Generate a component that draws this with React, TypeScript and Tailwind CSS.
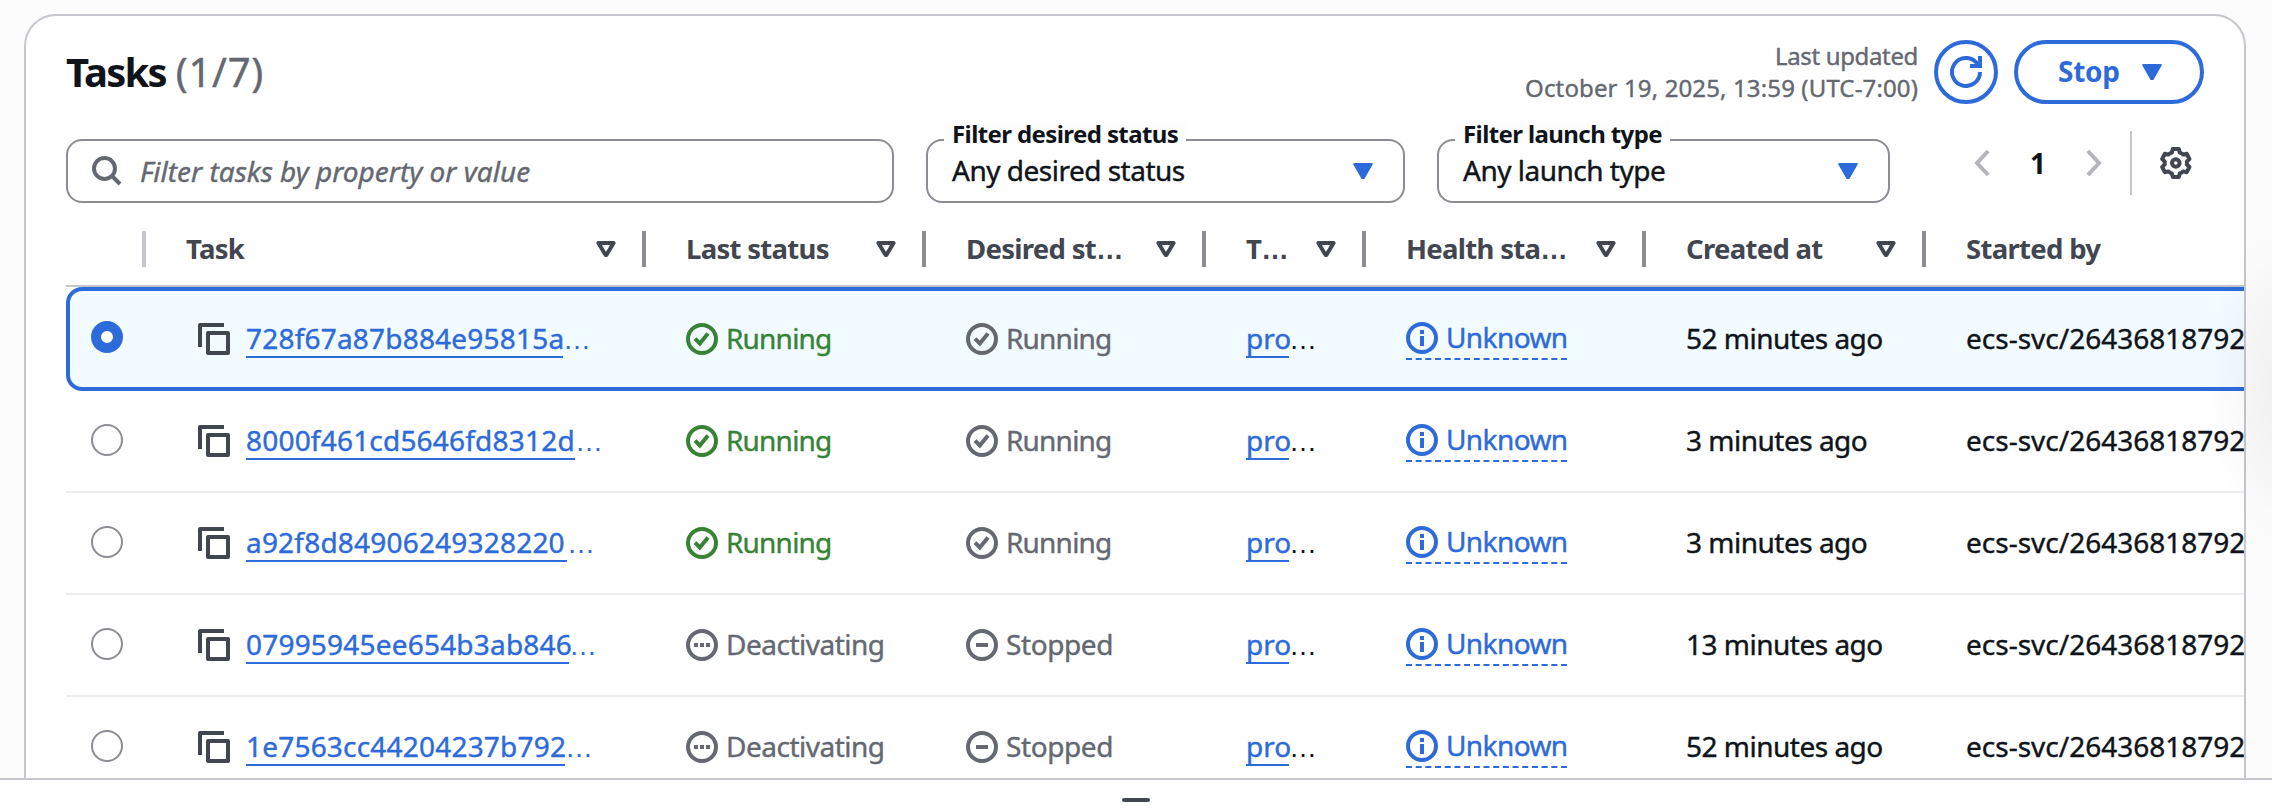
import React from "react";

const sans = "font-['Noto_Sans','Open_Sans',sans-serif]";

function Caret({ className = "" }: { className?: string }) {
  return (
    <svg viewBox="0 0 20 16" className={`h-4 w-5 shrink-0 ${className}`}>
      <path d="M1.2 1H18.8L10.8 15H9.2Z" fill="currentColor" stroke="currentColor" strokeWidth="2" strokeLinejoin="round" />
    </svg>
  );
}

function SortIcon() {
  return (
    <svg viewBox="0 0 20 16" className="h-4 w-5 shrink-0">
      <path d="M2.4 2H17.6L10.4 14H9.6Z" fill="none" stroke="currentColor" strokeWidth="4" strokeLinejoin="round" />
    </svg>
  );
}

function StatusIcon({ kind, className = "" }: { kind: "check" | "dots" | "minus" | "info"; className?: string }) {
  return (
    <svg viewBox="0 0 32 32" className={`size-8 shrink-0 ${className}`} fill="none" stroke="currentColor" strokeWidth="4">
      <circle cx="16" cy="16" r="14" />
      {kind === "check" && <path d="M9 15.6L13.8 20.4L22 10.4" />}
      {kind === "minus" && <path d="M10 16H22" />}
      {kind === "dots" && <path d="M8 16H12M14 16H18M20 16H24" />}
      {kind === "info" && <path d="M16 14V24M16 8V12" />}
    </svg>
  );
}

function CopyIcon() {
  return (
    <svg viewBox="0 0 32 32" className="size-8 shrink-0 text-[#424650]" fill="none" stroke="currentColor" strokeWidth="4">
      <path d="M2 24V2H26" strokeLinejoin="round" />
      <path d="M10 10H30V30H10Z" strokeLinejoin="round" />
    </svg>
  );
}

function Ellipsis() {
  return <span className="font-['Liberation_Sans',sans-serif] tracking-normal [-webkit-text-stroke:0px]">…</span>;
}

const columns = [
  { label: "Task", cut: false, width: "w-[500px]" },
  { label: "Last status", cut: false, width: "w-[280px]" },
  { label: "Desired st", cut: true, width: "w-[280px]" },
  { label: "T", cut: true, width: "w-[160px]" },
  { label: "Health sta", cut: true, width: "w-[280px]" },
  { label: "Created at", cut: false, width: "w-[280px]" },
  { label: "Started by", cut: false, width: "w-[500px]" },
];

const rows = [
  { id: "728f67a87b884e95815a", width: "w-[317px]", running: true, created: "52 minutes ago" },
  { id: "8000f461cd5646fd8312d", width: "w-[329px]", running: true, created: "3 minutes ago" },
  { id: "a92f8d84906249328220", width: "w-[321px]", running: true, created: "3 minutes ago" },
  { id: "07995945ee654b3ab846", width: "w-[323px]", running: false, created: "13 minutes ago" },
  { id: "1e7563cc44204237b792", width: "w-[319px]", running: false, created: "52 minutes ago" },
];

function Row({ row, selected }: { row: (typeof rows)[number]; selected: boolean }) {
  return (
    <div
      className={
        selected
          ? "flex h-[104px] w-[2300px] items-center rounded-2xl border-4 border-[#2d6ada] bg-[#f2fbff]"
          : "flex h-[102px] w-[2300px] items-center border-b-2 border-[#ebebf0] pl-1"
      }
    >
      <div className={`w-[74px] shrink-0 pl-[21px] ${selected ? "pb-1" : "pb-0.5"}`}>
        {selected ? (
          <div className="size-8 rounded-full border-[10px] border-[#2d6ada] bg-white" />
        ) : (
          <div className="size-8 rounded-full border-2 border-[#8c8c94] bg-white" />
        )}
      </div>
      <div className="flex w-[500px] shrink-0 items-center pl-[54px]">
        <CopyIcon />
        <span className="ml-4 flex h-10 items-baseline text-[#2d6ada]">
          <span className={`h-[39px] shrink-0 border-b-2 border-[#2d6ada] tracking-[0.2px] ${row.width}`}>{row.id}</span>
          <Ellipsis />
        </span>
      </div>
      <div className={`flex w-[280px] shrink-0 items-center gap-2 pl-[42px] ${row.running ? "tracking-[-0.8px] text-[#368336]" : "tracking-[-0.5px] text-[#656871]"}`}>
        <StatusIcon kind={row.running ? "check" : "dots"} />
        <span className="pb-0.5">{row.running ? "Running" : "Deactivating"}</span>
      </div>
      <div className={`flex w-[280px] shrink-0 items-center gap-2 pl-[42px] text-[#656871] ${row.running ? "tracking-[-0.8px]" : "tracking-[-0.4px]"}`}>
        <StatusIcon kind={row.running ? "check" : "minus"} />
        <span className="pb-0.5">{row.running ? "Running" : "Stopped"}</span>
      </div>
      <div className="flex h-10 w-[160px] shrink-0 items-baseline pl-[42px]">
        <span className="h-[39px] w-[43px] border-b-2 border-[#2d6ada] text-[#2d6ada]">pro</span>
        <Ellipsis />
      </div>
      <div className="w-[280px] shrink-0 pl-[42px] text-[#2d6ada]">
        <div className="flex h-[42px] w-[161px] items-start gap-2 border-b-2 border-dashed border-[#2d6ada]">
          <StatusIcon kind="info" className="mt-1" />
          <span className="tracking-[-0.6px]">Unknown</span>
        </div>
      </div>
      <div className="w-[280px] shrink-0 pb-0.5 pl-[42px] tracking-[-0.5px]">{row.created}</div>
      <div className="shrink-0 pb-0.5 pl-[42px]">ecs-svc/26436818792</div>
    </div>
  );
}

function Select({ label, value, className }: { label: string; value: string; className: string }) {
  return (
    <div className={`relative flex h-16 shrink-0 items-center justify-between rounded-2xl border-2 border-[#8c8c94] bg-white pr-[30px] pl-6 ${className}`}>
      <span className="absolute -top-5 left-4 h-[25px] bg-[#fdfdfd] px-2 text-2xl leading-[25px] font-bold tracking-[-0.6px] [-webkit-text-stroke:0px]">{label}</span>
      <span className="pb-0.5 tracking-[-0.5px]">{value}</span>
      <Caret className="text-[#2d6ada]" />
    </div>
  );
}

export default function App() {
  return (
    <div className={`relative flex h-[812px] w-[2272px] flex-col overflow-hidden bg-[#fcfcfd] text-[28px] leading-[38px] whitespace-nowrap text-[#0f141a] [-webkit-text-stroke:0.4px] ${sans}`}>
      <div className="h-[778px] overflow-hidden pt-[14px] pl-6">
        <div className="h-[900px] w-[2222px] overflow-hidden rounded-[32px] border-2 border-[#c6c6cd] bg-white pl-10">
          <div className="flex h-[123px] items-start pt-6 pr-10">
            <h2 className="mt-1 flex gap-2.5 text-[40px] leading-[56px]">
              <span className="font-bold tracking-[-1.8px] [-webkit-text-stroke:0px]">Tasks</span>
              <span className="tracking-[0.7px] text-[#656871]">(1/7)</span>
            </h2>
            <div className="ml-auto text-right text-2xl leading-8 text-[#656871]">
              <div className="tracking-[-0.35px]">Last updated</div>
              <div className="tracking-[0.13px]">October 19, 2025, 13:59 (UTC-7:00)</div>
            </div>
            <button className="ml-4 flex size-16 items-center justify-center rounded-full border-4 border-[#2d6ada] text-[#2d6ada]">
              <svg viewBox="0 0 32 32" className="size-8" fill="none" stroke="currentColor" strokeWidth="4">
                <path d="M30 16A14 14 0 1 1 26.5 6.7L29.5 10" />
                <path d="M30 0V10H20" />
              </svg>
            </button>
            <button className="ml-4 flex h-16 w-[190px] items-center rounded-full border-4 border-[#2d6ada] pl-10 font-bold text-[#2d6ada] [-webkit-text-stroke:0px]">
              <span className="w-[60px] pb-0.5 tracking-[-0.3px]">Stop</span>
              <Caret className="ml-6" />
            </button>
          </div>
          <div className="flex h-[90px]">
            <div className="flex h-16 w-[828px] shrink-0 items-center gap-[18px] rounded-2xl border-2 border-[#8c8c94] pl-6 text-[#656871]">
              <svg viewBox="0 0 30 30" className="size-[30px]" fill="none" stroke="currentColor" strokeWidth="4">
                <circle cx="12.5" cy="12.5" r="10.5" />
                <path d="M19.5 19.5L28 28" />
              </svg>
              <span className="italic">Filter tasks by property or value</span>
            </div>
            <Select className="ml-8 w-[479px]" label="Filter desired status" value="Any desired status" />
            <Select className="ml-8 w-[453px]" label="Filter launch type" value="Any launch type" />
            <div className="-mt-2 ml-[84px] flex h-16 items-center">
              <svg viewBox="0 0 16 28" className="h-7 w-4 text-[#b4b4bb]" fill="none" stroke="currentColor" strokeWidth="4">
                <path d="M14.2 2L3 14L14.2 26" />
              </svg>
              <span className="w-24 text-center font-bold [-webkit-text-stroke:0px]">1</span>
              <svg viewBox="0 0 16 28" className="h-7 w-4 text-[#b4b4bb]" fill="none" stroke="currentColor" strokeWidth="4">
                <path d="M1.8 2L13 14L1.8 26" />
              </svg>
              <div className="ml-7 h-16 w-0.5 bg-[#c6c6cd]" />
              <svg viewBox="0 0 32 32" className="ml-7 size-8 text-[#424650]" fill="none" stroke="currentColor" strokeWidth="4" strokeLinejoin="round">
                <path d="M12.8 2H18.8L19.8 5.6Q21.8 6.2 23.2 7.6L26.8 6.8L29.4 12L26.8 14.6Q27.2 16 26.8 17.4L29.4 20L26.8 25.2L23.2 24.4Q21.8 25.8 19.8 26.4L18.8 30H12.8L11.8 26.4Q9.8 25.8 8.4 24.4L4.8 25.2L2.2 20L4.8 17.4Q4.4 16 4.8 14.6L2.2 12L4.8 6.8L8.4 7.6Q9.8 6.2 11.8 5.6Z" />
                <circle cx="15.8" cy="16" r="3.8" />
              </svg>
            </div>
          </div>
          <div className="flex h-[58px] w-[2300px] border-b-2 border-[#c6c6cd] text-[27.5px] font-bold text-[#424650] [-webkit-text-stroke:0px]">
            <div className="mt-0.5 h-9 w-20 shrink-0 border-r-4 border-[#c6c6cd]" />
            {columns.map((c) => (
              <div key={c.label} className={`mt-0.5 flex h-9 shrink-0 items-center justify-between border-r-4 border-[#8c8c94] pr-[26px] pl-10 ${c.width}`}>
                <span className="tracking-[-0.7px]">
                  {c.label}
                  {c.cut && <Ellipsis />}
                </span>
                <SortIcon />
              </div>
            ))}
          </div>
          {rows.map((r, i) => (
            <Row key={r.id} row={r} selected={i === 0} />
          ))}
        </div>
      </div>
      <div className="flex h-[34px] shrink-0 justify-center border-t-2 border-[#c6c6cd] bg-white pt-[18px]">
        <div className="h-1 w-7 rounded-full bg-[#424650]" />
      </div>
      <div className="pointer-events-none absolute top-[225px] right-0 h-[320px] w-[70px] bg-[radial-gradient(ellipse_at_130%_50%,rgba(0,0,0,0.06),transparent_70%)]" />
    </div>
  );
}
